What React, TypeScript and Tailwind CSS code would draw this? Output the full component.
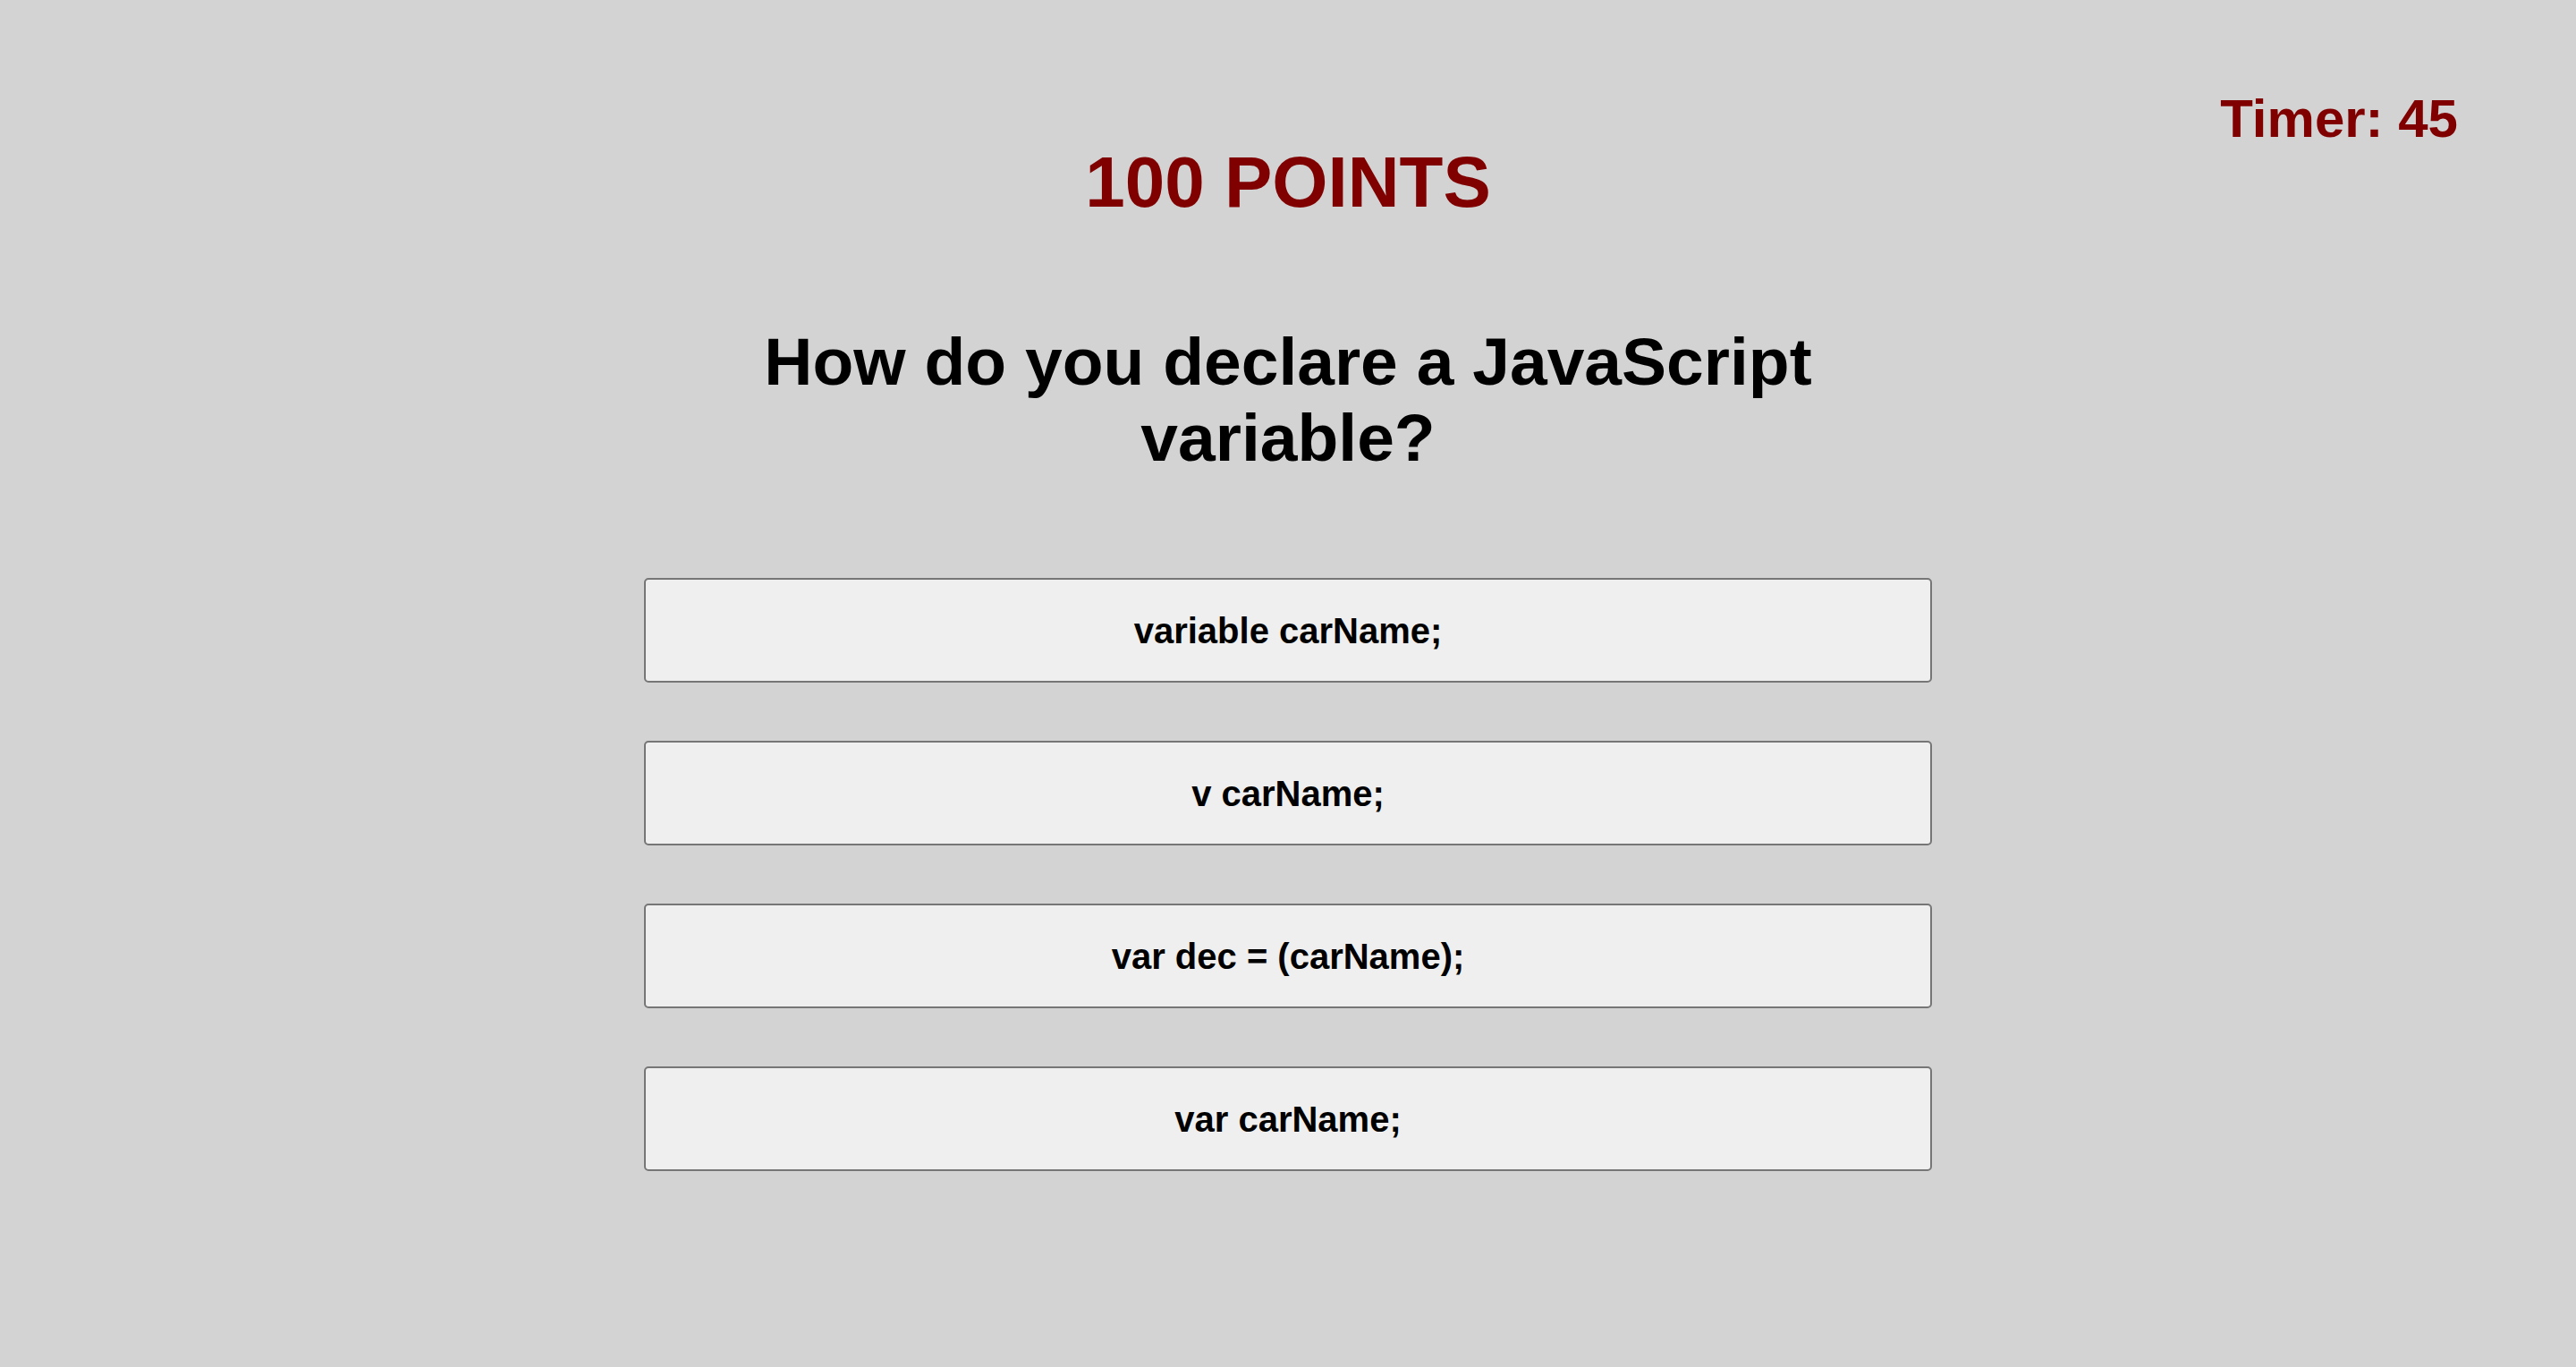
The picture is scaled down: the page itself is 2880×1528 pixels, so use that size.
const answers = ["variable carName;", "v carName;", "var dec = (carName);", "var carName;"];

export default function App() {
  return (
    <main className="min-h-screen w-full bg-[#d3d3d3] font-['Liberation_Sans',Arial,sans-serif] font-bold">
      {/* Timer */}
      <div className="flex justify-end pt-[103px] pr-[132px]">
        <span className="text-[60px] leading-[60px] text-[#800000]">Timer: 45</span>
      </div>

      <h1 className="mt-[1px] text-center text-[80px] leading-[80px] text-[#800000]">100 POINTS</h1>

      <h2 className="mx-auto mt-[118px] w-[1240px] text-center text-[75px] leading-[85px] text-black">
        How do you declare a JavaScript variable?
      </h2>

      {/* Answer buttons */}
      <div className="mx-auto mt-[114px] flex w-[1440px] flex-col gap-[65px]">
        {answers.map((a) => (
          <button
            key={a}
            className="h-[117px] w-full rounded-[5px] border-2 border-[#767676] bg-[#efefef] text-center text-[40px] leading-[40px] text-black"
          >
            {a}
          </button>
        ))}
      </div>
    </main>
  );
}
